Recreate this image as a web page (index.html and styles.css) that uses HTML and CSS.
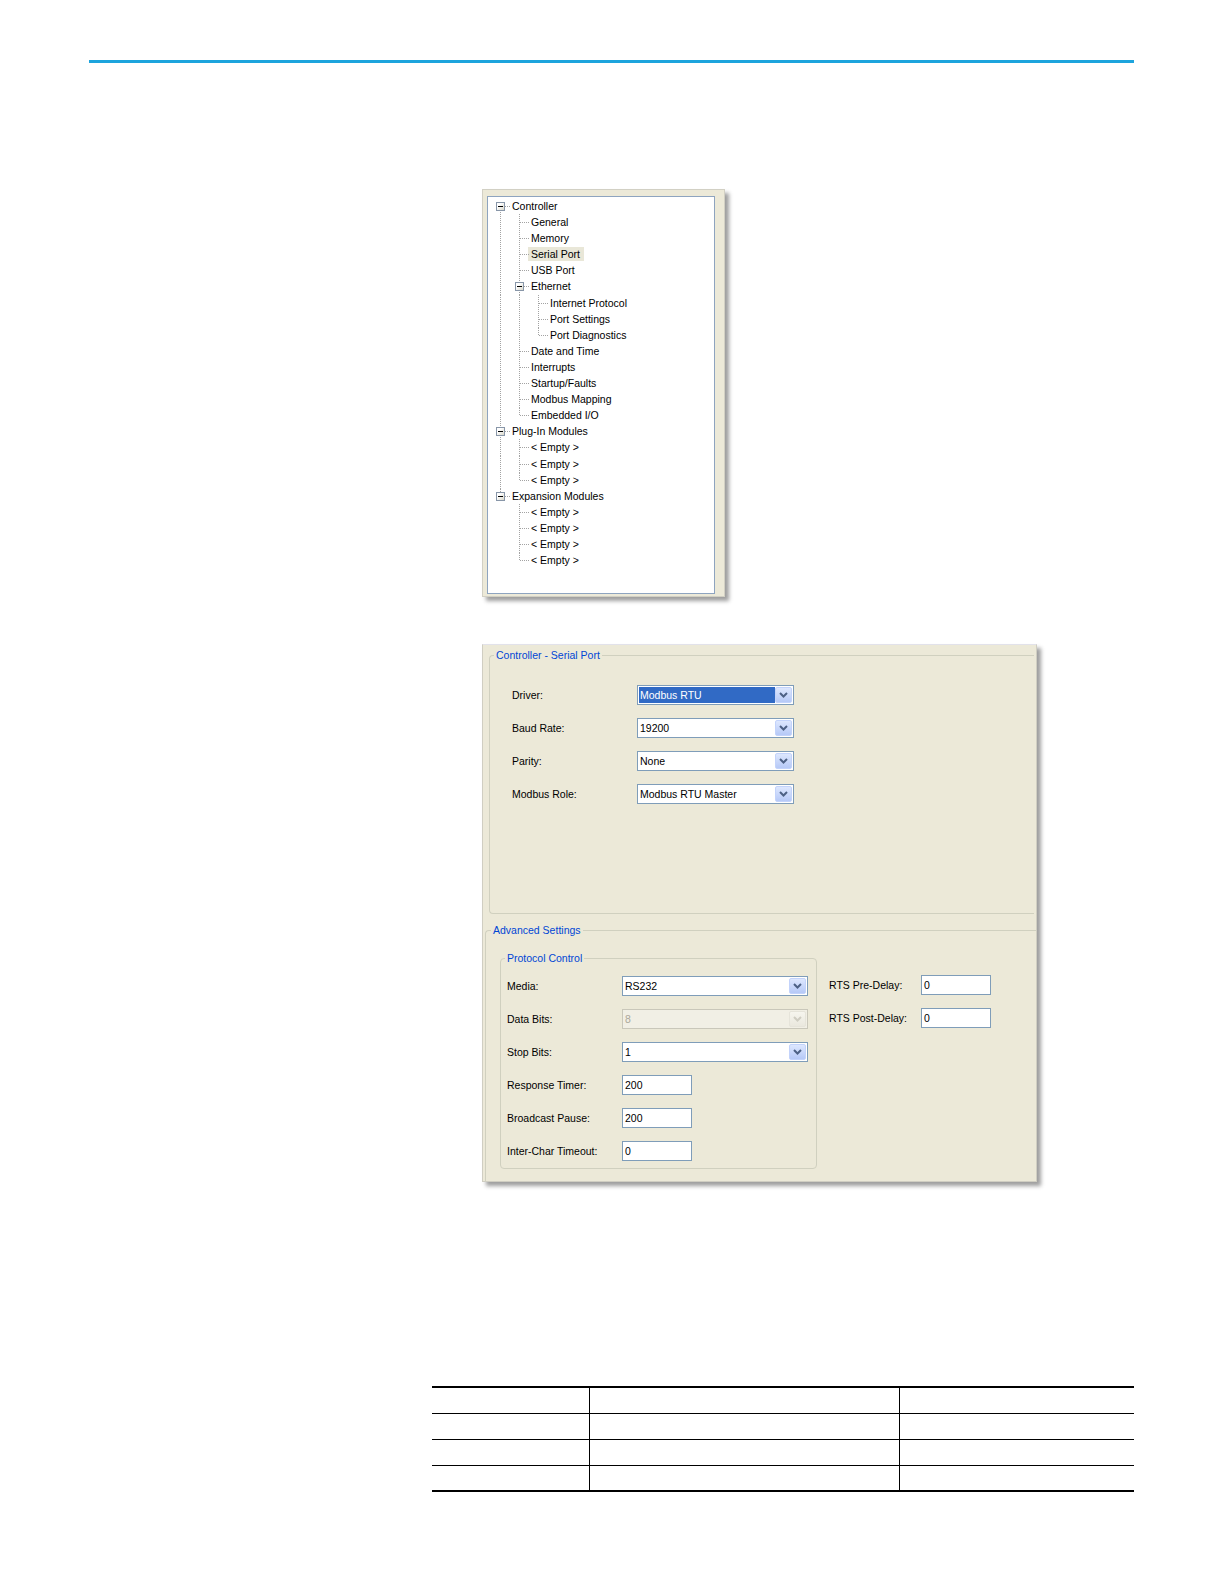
FILE: index.html
```html
<!DOCTYPE html>
<html lang="en">
<head>
<meta charset="utf-8">
<title>Controller - Serial Port</title>
<link rel="stylesheet" href="styles.css">
</head>
<body>
<div class="page">
  <div class="rule"></div>

  <div class="tree-frame">
    <div class="tree">
      <div class="row"><span class="c exp down"><span class="box"></span></span><span class="t">Controller</span></div>
      <div class="row"><span class="c pipe"></span><span class="c tee"></span><span class="t">General</span></div>
      <div class="row"><span class="c pipe"></span><span class="c tee"></span><span class="t">Memory</span></div>
      <div class="row"><span class="c pipe"></span><span class="c tee"></span><span class="t sel">Serial Port</span></div>
      <div class="row"><span class="c pipe"></span><span class="c tee"></span><span class="t">USB Port</span></div>
      <div class="row"><span class="c pipe"></span><span class="c exp mid"><span class="box"></span></span><span class="t">Ethernet</span></div>
      <div class="row"><span class="c pipe"></span><span class="c pipe"></span><span class="c tee"></span><span class="t">Internet Protocol</span></div>
      <div class="row"><span class="c pipe"></span><span class="c pipe"></span><span class="c tee"></span><span class="t">Port Settings</span></div>
      <div class="row"><span class="c pipe"></span><span class="c pipe"></span><span class="c ell"></span><span class="t">Port Diagnostics</span></div>
      <div class="row"><span class="c pipe"></span><span class="c tee"></span><span class="t">Date and Time</span></div>
      <div class="row"><span class="c pipe"></span><span class="c tee"></span><span class="t">Interrupts</span></div>
      <div class="row"><span class="c pipe"></span><span class="c tee"></span><span class="t">Startup/Faults</span></div>
      <div class="row"><span class="c pipe"></span><span class="c tee"></span><span class="t">Modbus Mapping</span></div>
      <div class="row"><span class="c pipe"></span><span class="c ell"></span><span class="t">Embedded I/O</span></div>
      <div class="row"><span class="c exp mid"><span class="box"></span></span><span class="t">Plug-In Modules</span></div>
      <div class="row"><span class="c pipe"></span><span class="c tee"></span><span class="t">&lt; Empty &gt;</span></div>
      <div class="row"><span class="c pipe"></span><span class="c tee"></span><span class="t">&lt; Empty &gt;</span></div>
      <div class="row"><span class="c pipe"></span><span class="c ell"></span><span class="t">&lt; Empty &gt;</span></div>
      <div class="row"><span class="c exp up"><span class="box"></span></span><span class="t">Expansion Modules</span></div>
      <div class="row"><span class="c"></span><span class="c tee"></span><span class="t">&lt; Empty &gt;</span></div>
      <div class="row"><span class="c"></span><span class="c tee"></span><span class="t">&lt; Empty &gt;</span></div>
      <div class="row"><span class="c"></span><span class="c tee"></span><span class="t">&lt; Empty &gt;</span></div>
      <div class="row"><span class="c"></span><span class="c ell"></span><span class="t">&lt; Empty &gt;</span></div>
    </div>
  </div>

  <div class="panel">
    <fieldset class="fs fs-main">
      <legend>Controller - Serial Port</legend>
      <div class="grid grid-main">
        <span class="lbl">Driver:</span>
        <div class="combo sel"><span class="val">Modbus RTU</span><span class="btn"><svg width="15" height="14" viewBox="0 0 15 14"><polyline points="4,5 7.5,8.5 11,5" fill="none" stroke="#4d6185" stroke-width="2"/></svg></span></div>
        <span class="lbl">Baud Rate:</span>
        <div class="combo"><span class="val">19200</span><span class="btn"><svg width="15" height="14" viewBox="0 0 15 14"><polyline points="4,5 7.5,8.5 11,5" fill="none" stroke="#4d6185" stroke-width="2"/></svg></span></div>
        <span class="lbl">Parity:</span>
        <div class="combo"><span class="val">None</span><span class="btn"><svg width="15" height="14" viewBox="0 0 15 14"><polyline points="4,5 7.5,8.5 11,5" fill="none" stroke="#4d6185" stroke-width="2"/></svg></span></div>
        <span class="lbl">Modbus Role:</span>
        <div class="combo"><span class="val">Modbus RTU Master</span><span class="btn"><svg width="15" height="14" viewBox="0 0 15 14"><polyline points="4,5 7.5,8.5 11,5" fill="none" stroke="#4d6185" stroke-width="2"/></svg></span></div>
      </div>
    </fieldset>

    <fieldset class="fs fs-adv">
      <legend>Advanced Settings</legend>
      <div class="adv-body">
        <fieldset class="fs fs-proto">
          <legend>Protocol Control</legend>
          <div class="grid grid-proto">
            <span class="lbl">Media:</span>
            <div class="combo"><span class="val">RS232</span><span class="btn"><svg width="15" height="14" viewBox="0 0 15 14"><polyline points="4,5 7.5,8.5 11,5" fill="none" stroke="#4d6185" stroke-width="2"/></svg></span></div>
            <span class="lbl">Data Bits:</span>
            <div class="combo dis"><span class="val">8</span><span class="btn"><svg width="15" height="14" viewBox="0 0 15 14"><polyline points="4,5 7.5,8.5 11,5" fill="none" stroke="#cfcdc2" stroke-width="2"/></svg></span></div>
            <span class="lbl">Stop Bits:</span>
            <div class="combo"><span class="val">1</span><span class="btn"><svg width="15" height="14" viewBox="0 0 15 14"><polyline points="4,5 7.5,8.5 11,5" fill="none" stroke="#4d6185" stroke-width="2"/></svg></span></div>
            <span class="lbl">Response Timer:</span>
            <div class="tb">200</div>
            <span class="lbl">Broadcast Pause:</span>
            <div class="tb">200</div>
            <span class="lbl">Inter-Char Timeout:</span>
            <div class="tb">0</div>
          </div>
        </fieldset>
        <div class="grid grid-rts">
          <span class="lbl">RTS Pre-Delay:</span>
          <div class="tb">0</div>
          <span class="lbl">RTS Post-Delay:</span>
          <div class="tb">0</div>
        </div>
      </div>
    </fieldset>
  </div>

  <table class="tbl">
    <colgroup><col class="c1"><col class="c2"><col class="c3"></colgroup>
    <tbody>
      <tr><td></td><td></td><td></td></tr>
      <tr><td></td><td></td><td></td></tr>
      <tr><td></td><td></td><td></td></tr>
      <tr><td></td><td></td><td></td></tr>
    </tbody>
  </table>
</div>
</body>
</html>
```

FILE: styles.css
```css
* { box-sizing: border-box; }
html, body { margin: 0; padding: 0; background: #fff; }
body {
  font-family: "Liberation Sans", Arial, sans-serif;
  font-size: 10.5px;
  color: #000;
}
.page {
  width: 1224px;
  height: 1584px;
  overflow: hidden;
  padding-top: 60px;
}
.rule {
  margin-left: 89px;
  width: 1045px;
  height: 3px;
  background: #1da4dd;
}

/* ---------- tree ---------- */
.tree-frame {
  margin: 126px 0 0 482px;
  width: 243px;
  height: 408px;
  background: #ece9d8;
  border: 1px solid #d2d0c4;
  padding: 6px 9px 2px 4px;
  box-shadow: 4px 4px 4px rgba(0, 0, 0, 0.38);
}
.tree {
  height: 100%;
  background: #fff;
  border: 1px solid #8ea4bf;
  padding: 1px 0 0 3px;
}
.row {
  display: flex;
  height: 16.1px;
}
.c {
  position: relative;
  flex: none;
  width: 19px;
  height: 16px;
}
.pipe::before, .tee::before, .ell::before, .exp::before {
  content: "";
  position: absolute;
  left: 9px;
  top: 0;
  bottom: -1px;
  border-left: 1px dotted #a3a3a3;
}
.ell::before { bottom: 8px; }
.exp.down::before { top: 8px; }
.exp.up::before { bottom: 8px; }
.tee::after, .ell::after, .exp::after {
  content: "";
  position: absolute;
  left: 10px;
  right: 0;
  top: 8px;
  border-top: 1px dotted #a3a3a3;
}
.exp::after { left: 14px; }
.box {
  position: absolute;
  left: 5px;
  top: 4px;
  width: 9px;
  height: 9px;
  border: 1px solid #8896a8;
  background: linear-gradient(135deg, #ffffff 30%, #d9d7c9);
  z-index: 1;
}
.box::after {
  content: "";
  position: absolute;
  left: 1px;
  top: 3px;
  width: 5px;
  height: 1px;
  background: #000;
}
.t {
  line-height: 16px;
  padding: 0 2px;
  white-space: nowrap;
}
.t.sel {
  background: #e9e7d8;
  height: 14px;
  line-height: 14px;
  margin-top: 1px;
  margin-left: -1px;
  padding: 0 4px 0 3px;
}

/* ---------- panel ---------- */
.panel {
  margin: 47px 0 0 482px;
  width: 555px;
  height: 538px;
  background: #ece9d8;
  border: 1px solid #d0cec2;
  border-top-color: #e2e2ea;
  box-shadow: 4px 4px 4px rgba(0, 0, 0, 0.38);
  padding: 4px 0 0 6px;
  overflow: hidden;
}
.fs {
  margin: 0;
  padding: 0;
  min-width: 0;
  border: 1px solid #d0d0bf;
  border-radius: 4px;
}
.fs legend {
  margin-left: 4px;
  padding: 0 2px;
  line-height: 13px;
  height: 13px;
  color: #0046d5;
  font-size: 10.5px;
}
.fs-main {
  width: 545px;
  height: 265px;
  border-right: none;
  border-radius: 4px 0 0 4px;
}
.fs-adv {
  margin: 10px 0 0 -4px;
  width: 551px;
  height: 275px;
  border-right: none;
  border-bottom: none;
  border-radius: 4px 0 0 0;
}
.fs-adv > legend { margin-left: 5px; }
.adv-body {
  display: flex;
  align-items: flex-start;
  padding: 15px 0 0 14px;
}
.fs-proto {
  width: 317px;
  height: 217px;
  flex: none;
}
.grid {
  display: grid;
  grid-auto-rows: 20px;
  align-items: center;
}
.grid-main {
  grid-template-columns: 125px 157px;
  row-gap: 13px;
  padding: 23px 0 0 22px;
}
.grid-proto {
  grid-template-columns: 115px 186px;
  row-gap: 13px;
  padding: 11px 0 0 6px;
}
.grid-rts {
  grid-template-columns: 92px 70px;
  row-gap: 12.8px;
  margin: 23px 0 0 12px;
}
.lbl { white-space: nowrap; }

.combo {
  display: flex;
  height: 20px;
  border: 1px solid #7f9db9;
  background: #fff;
  padding: 1px;
}
.val {
  flex: 1;
  line-height: 16px;
  padding-left: 1px;
  white-space: nowrap;
}
.combo.sel .val { background: #316ac5; color: #fff; }
.btn {
  flex: none;
  width: 17px;
  height: 16px;
  border: 1px solid #c3d3fb;
  border-radius: 2px;
  background: linear-gradient(#dde7fe, #b6c9f7);
  display: flex;
  align-items: center;
  justify-content: center;
}
.btn svg { display: block; }
.combo.dis {
  border-color: #c9c7ba;
  background: #f1efe5;
}
.combo.dis .val { color: #aca899; }
.combo.dis .btn {
  border-color: #e6e4da;
  background: linear-gradient(#f6f5ee, #eae8de);
}
.tb {
  justify-self: start;
  width: 70px;
  height: 20px;
  border: 1px solid #7f9db9;
  background: #fff;
  padding-left: 2px;
  line-height: 18px;
}

/* ---------- table ---------- */
.tbl {
  margin: 204px 0 0 432px;
  width: 702px;
  border-collapse: collapse;
  table-layout: fixed;
}
.c1 { width: 157px; }
.c2 { width: 310px; }
.c3 { width: 235px; }
.tbl td {
  height: 26px;
  padding: 0;
  border-top: 1px solid #000;
}
.tbl tr:first-child td { border-top: 2px solid #000; }
.tbl tr:last-child td { border-bottom: 2px solid #000; }
.tbl td + td { border-left: 1px solid #000; }
```
